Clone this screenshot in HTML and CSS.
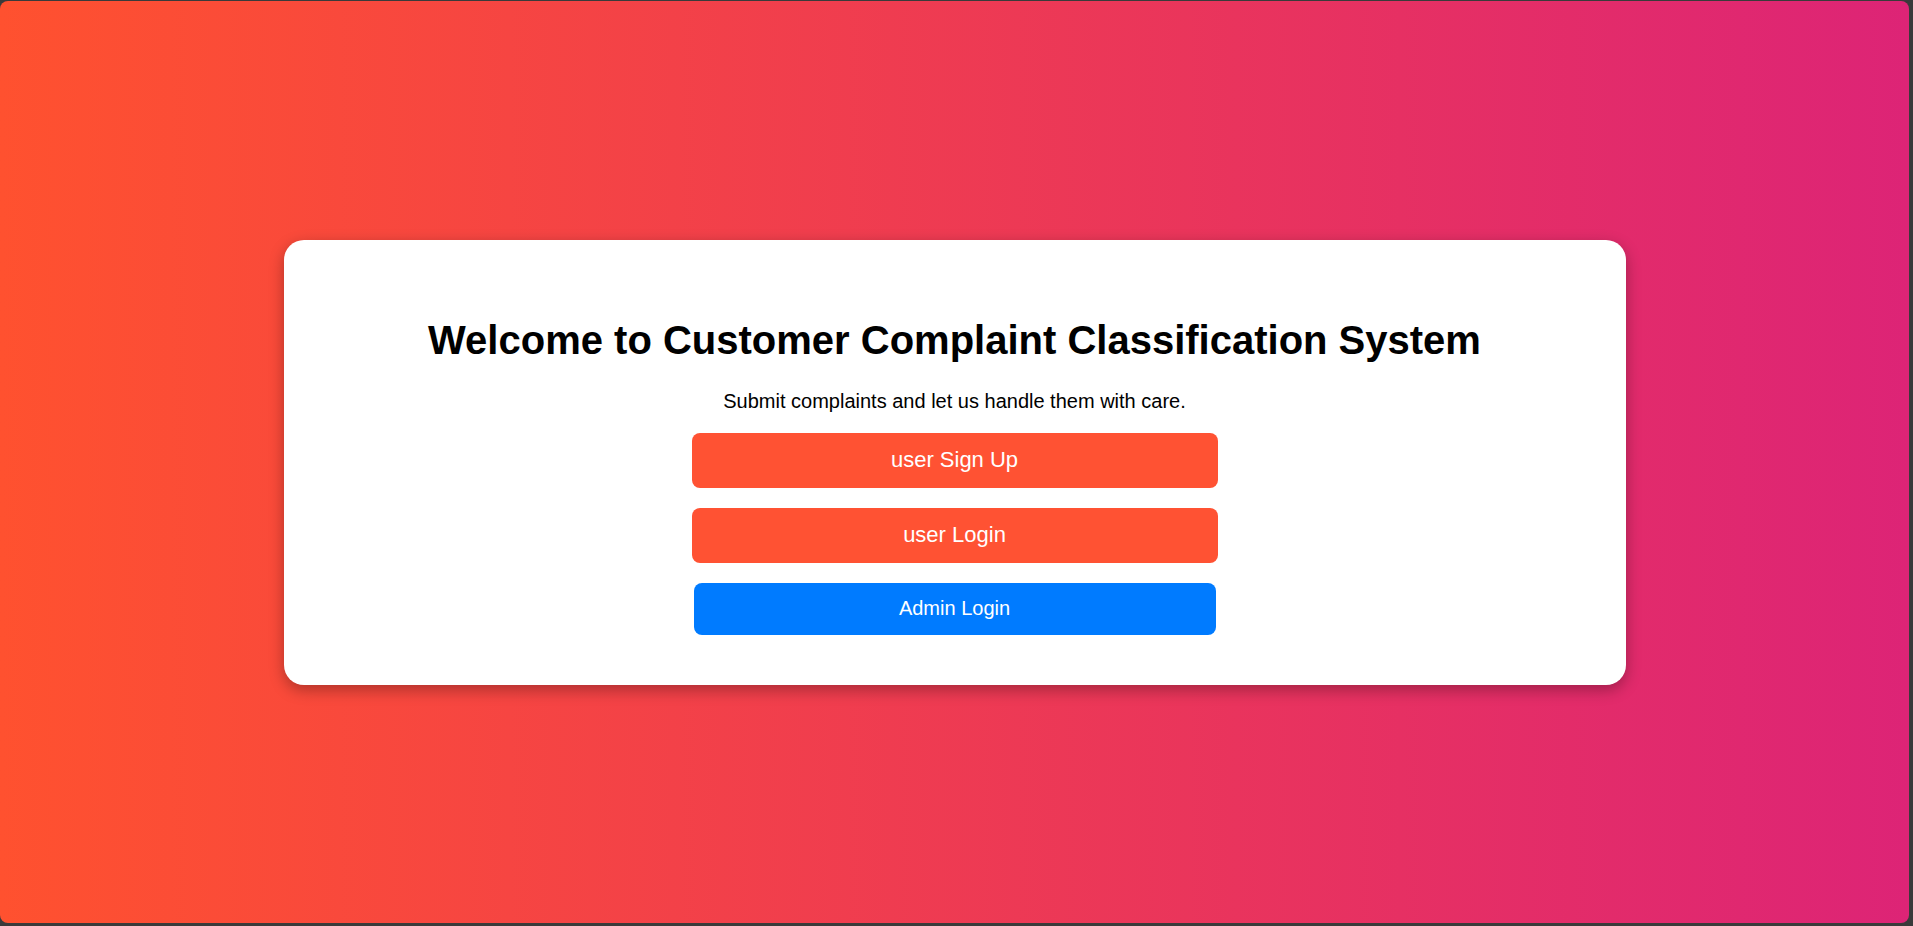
FILE: index.html
```html
<!DOCTYPE html>
<html lang="en">
<head>
<meta charset="utf-8">
<title>Customer Complaint Classification System</title>
<link rel="stylesheet" href="styles.css">
</head>
<body>
  <div class="frame">
    <main class="card">
      <h1 class="title">Welcome to Customer Complaint Classification System</h1>
      <p class="subtitle">Submit complaints and let us handle them with care.</p>
      <div class="actions">
        <a class="btn btn-orange" href="#">user Sign Up</a>
        <a class="btn btn-orange" href="#">user Login</a>
        <a class="btn btn-blue" href="#">Admin Login</a>
      </div>
    </main>
  </div>
</body>
</html>
```

FILE: styles.css
```css
html, body {
  margin: 0;
  padding: 0;
}

body {
  background: #3a3a3a;
  height: 926px;
  overflow: hidden;
  font-family: "Liberation Sans", Arial, sans-serif;
}

.frame {
  margin: 1px 4px 3px 0;
  height: 922px;
  border-radius: 8px;
  background: linear-gradient(to right, #ff512f, #dd2476);
  display: flex;
  align-items: center;
  justify-content: center;
}

.card {
  width: 1342px;
  box-sizing: border-box;
  padding: 50px 0 50px;
  background: #ffffff;
  border-radius: 20px;
  box-shadow: 0 5px 15px rgba(0, 0, 0, 0.3);
  text-align: center;
}

.title {
  margin: 27px 0;
  font-size: 40px;
  line-height: 46px;
  font-weight: bold;
  color: #000;
}

.subtitle {
  margin: 0 0 20px;
  font-size: 20px;
  line-height: 23px;
  color: #000;
}

.actions {
  display: flex;
  flex-direction: column;
  align-items: center;
  gap: 20px;
}

.btn {
  display: flex;
  align-items: center;
  justify-content: center;
  color: #fff;
  text-decoration: none;
  border-radius: 8px;
}

.btn-orange {
  width: 526px;
  height: 55px;
  background: #ff5233;
  font-size: 22px;
}

.btn-blue {
  width: 522px;
  height: 52px;
  background: #007bff;
  font-size: 20px;
}
```
